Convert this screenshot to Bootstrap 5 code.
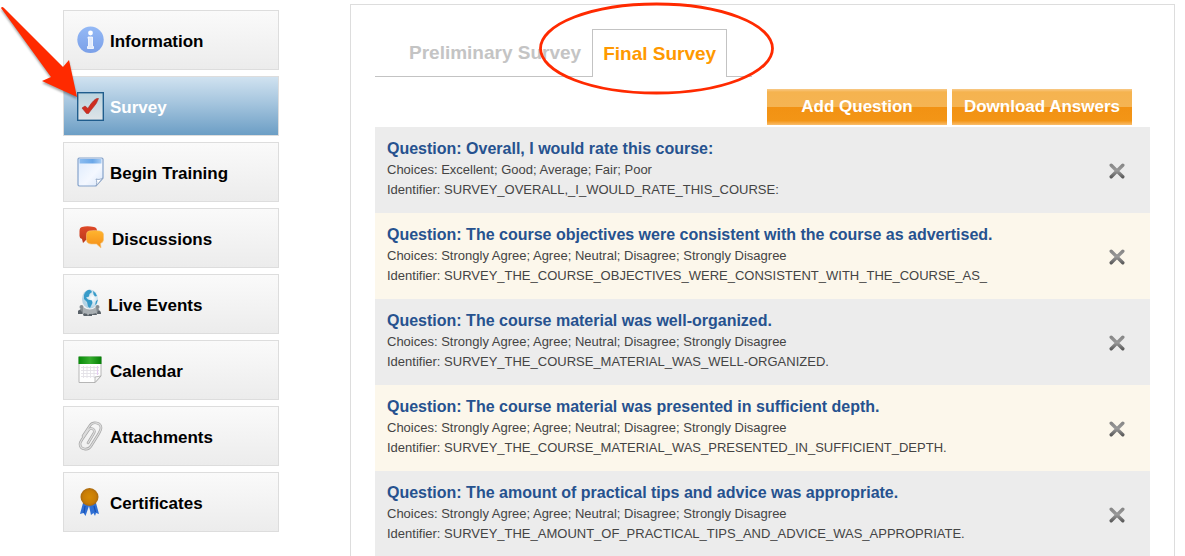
<!DOCTYPE html>
<html lang="en">
<head>
<meta charset="utf-8">
<meta name="viewport" content="width=device-width, initial-scale=1">
<title>Final Survey</title>
<link href="https://cdn.jsdelivr.net/npm/bootstrap@5.3.0/dist/css/bootstrap.min.css" rel="stylesheet">
<style>
  body { font-family: "Liberation Sans", Arial, sans-serif; background: #fff; color: #444; }
  .page { padding: 4px 10px 24px 63px; gap: 71px; }
  .side { width: 216px; padding-top: 6px; gap: 6px; }
  .side-link { height: 60px; padding: 0 13px; gap: 6px; border: 1px solid #ddd; background: linear-gradient(#fafafa, #ececec); color: #000; font-size: 17px; font-weight: 700; text-decoration: none; }
  .side-link.active { background: linear-gradient(#d0e2f0, #a5c5de 45%, #6c9ec5); color: #fff; }
  .side-link span { padding-top: 4px; }
  .panel { border: 1px solid #ddd; padding: 24px; min-width: 0; }
  .tabs { width: 377px; height: 48px; padding-left: 24px; gap: 1px; border-bottom: 1px solid #c3c3c3; font-size: 19px; font-weight: 700; }
  .tabs .nav-link { padding: 9px 10px; color: #c4c4c4; line-height: 30px; border: 0; white-space: nowrap; }
  .tabs .nav-link.active { color: #f90; background: #fff; border: 1px solid #c3c3c3; border-bottom: 0; height: 48px; }
  .actions { gap: 5px; padding: 12px 18px 2px 0; }
  .btn-gold { width: 180px; height: 36px; padding: 0; border: 0; border-radius: 0; color: #fff; font-size: 17px; font-weight: 700; background: linear-gradient(#f8c987, #f5b34f 3px, #f5b453 50%, #f29213 50%, #f39516 88%, #f9bd6c); }
  .btn-gold:hover { color: #fff; }
  .question { height: 86px; padding: 11px 25px 0 12px; background: #ececec; font-size: 13px; line-height: 20px; }
  .question:nth-child(even) { background: #fcf7eb; }
  .question h2 { font-size: 16px; line-height: 22px; font-weight: 700; color: #26528f; margin: 0; }
  .btn-remove { border: 0; background: none; padding: 0; height: 66px; line-height: 0; }
  .mark-oval { left: 538px; top: 1px; }
  .mark-arrow { left: 0; top: 0; }
</style>
</head>
<body>
<div class="page d-flex align-items-start position-relative">
  <nav class="side d-flex flex-column flex-shrink-0" aria-label="Course">
    <a class="side-link d-flex align-items-center" href="#">
      <svg width="27" height="28" viewBox="0 0 27 28"><defs><linearGradient id="gi" x2="0" y2="1"><stop stop-color="#94b9f6"/><stop offset="1" stop-color="#7ba0e8"/></linearGradient></defs><circle cx="13.500" cy="13.800" r="13.200" fill="url(#gi)"/><circle cx="13.500" cy="7" r="2.400" fill="#fff"/><path d="M11 11H15.500V20.500H16.500V22.500H10.500V20.500H11.500V12.500H11Z" fill="#e3ebfc" stroke="#fff" stroke-width=".8"/></svg>
      <span>Information</span></a>
    <a class="side-link active d-flex align-items-center" href="#" aria-current="page">
      <svg width="27" height="29" viewBox="0 0 27 29"><defs><linearGradient id="gs" x2="0" y2="1"><stop stop-color="#b9d3de"/><stop offset="1" stop-color="#dfe4e8"/></linearGradient></defs><rect x=".7" y=".7" width="25.600" height="27.600" fill="url(#gs)" stroke="#205d8d" stroke-width="1.400"/><path d="M5 16L8 14L11 16.500C13.500 12 17 7.500 20 6.500H21.500L19.500 11C17.500 14 14 18 11.500 21.500H9.500Z" fill="#cf2d20" stroke="#a92a22" stroke-width=".6"/></svg>
      <span>Survey</span></a>
    <a class="side-link d-flex align-items-center" href="#">
      <svg width="27" height="30" viewBox="0 0 27 30"><defs><linearGradient id="gb" x2="1" y2="1"><stop stop-color="#dceafd"/><stop offset=".6" stop-color="#f4f8ff"/><stop offset="1" stop-color="#d8e6fa"/></linearGradient><linearGradient id="gt"><stop stop-color="#8bbcf0"/><stop offset=".6" stop-color="#6aa7e8"/><stop offset="1" stop-color="#a9cdf4"/></linearGradient></defs><path d="M2 1H25L26 2V21L19 29H2L1 28V2Z" fill="url(#gb)" stroke="#86a3cb" stroke-width="1.200"/><path d="M2.500 2H24.500V6.500H2.500Z" fill="url(#gt)"/><path d="M19 29C20 27 20 24 19 22C22 23 24 22 26 21Z" fill="#fff" stroke="#8fa5c4" stroke-width=".9"/></svg>
      <span>Begin Training</span></a>
    <a class="side-link d-flex align-items-center" href="#">
      <svg width="29" height="26" viewBox="0 0 29 26"><defs><linearGradient id="gr" x2="0" y2="1"><stop stop-color="#df4928"/><stop offset="1" stop-color="#b9371b"/></linearGradient><linearGradient id="gy" x2="0" y2="1"><stop stop-color="#ffb52e"/><stop offset="1" stop-color="#f48d18"/></linearGradient></defs><path d="M5 2Q10 .5 17 2Q20 2.500 20 6V12Q19 15 14 15H9L6 18L5 14Q2.500 13.500 2.500 11V6Q2.500 2.500 5 2Z" fill="url(#gr)"/><path d="M12 6Q18 4.800 23 6Q26 6.500 26.500 9V15Q26 18 23.500 18.500L24 23L19.500 19H14Q9.500 18.500 9.500 15V9.500Q9.500 6.500 12 6Z" fill="url(#gy)" stroke="#f5c276" stroke-width=".6"/></svg>
      <span>Discussions</span></a>
    <a class="side-link d-flex align-items-center" href="#">
      <svg width="25" height="32" viewBox="0 0 25 32"><defs><radialGradient id="gl" cx=".65" cy=".45"><stop stop-color="#fff"/><stop offset="1" stop-color="#b4d3e4"/></radialGradient></defs><g fill="#858c91"><circle cx="4.500" cy="19" r="2"/><circle cx="20.500" cy="19" r="2"/><path d="M2 23Q3 20 6 20L8 25H3Z"/><path d="M17 25L19 20Q22 20 23 24V26Z"/></g><path d="M1 26V23Q2 21.500 4 22.500L6 26ZM6 27Q7 22 10 24L11 28H7ZM11 28Q12 23 15 25V28ZM15 27Q16 23 19 24L20 27ZM20 26L21 23Q24 22 24 26Z" fill="#596168"/><path d="M6 19Q13 24 19 19L20 25Q13 27 6 25Z" fill="#a9afb3"/><ellipse cx="13" cy="11" rx="8" ry="9.500" fill="url(#gl)"/><path d="M7 7Q8 3 12 1.800L14 2.500L15 4L12.500 6L12 8.500L9 9.500L11 11.500L15 12.500L15.500 15L13 20L11 18.500L10 14L7 11ZM16 3L18.500 5L20 8L18 8.500L16.500 6.500ZM19 13L21 11.500L19.500 16L18 17Z" fill="#379bc9"/></svg>
      <span>Live Events</span></a>
    <a class="side-link d-flex align-items-center" href="#">
      <svg width="27" height="30" viewBox="0 0 27 30"><defs><linearGradient id="gc"><stop stop-color="#078a08"/><stop offset=".5" stop-color="#35ad2d"/><stop offset="1" stop-color="#057f06"/></linearGradient></defs><path d="M2 2H24V21L18 27.500H2Z" fill="#fff" stroke="#b6b6b6"/><path d="M1.500 1.500H24.500V9H1.500Z" fill="url(#gc)"/><path d="M4 12.500H22M4 15.500H22M4 18.500H22M4 21.500H18M6.500 11V23M10 11V23M13.500 11V23M17 11V23" stroke="#e3e1e6" stroke-width=".9"/><path d="M20.500 11V20" stroke="#e5cdf1" stroke-width="1.200"/><path d="M18 27.500V22L24 21Z" fill="#f5f5f5" stroke="#aaa" stroke-width=".8"/></svg>
      <span>Calendar</span></a>
    <a class="side-link d-flex align-items-center" href="#">
      <svg width="27" height="30" viewBox="0 0 27 30" fill="none" stroke-linecap="round"><path d="M6 15L13 4.500C16 0 24 1.500 24 7C24 9 22.500 11 21.500 13L14 25C11 30 3 28.500 3 23C3 21.500 4 20 5 18.500L11.500 9C14 6 18.500 8 17 12L11 22" stroke="#a5a5a5" stroke-width="2.600"/><path d="M6 15L13 4.500C16 0 24 1.500 24 7C24 9 22.500 11 21.500 13L14 25C11 30 3 28.500 3 23C3 21.500 4 20 5 18.500L11.500 9C14 6 18.500 8 17 12L11 22" stroke="#dcdcdc" stroke-width="1.300"/></svg>
      <span>Attachments</span></a>
    <a class="side-link d-flex align-items-center" href="#">
      <svg width="27" height="30" viewBox="0 0 27 30"><defs><radialGradient id="gm"><stop stop-color="#d58a06"/><stop offset=".7" stop-color="#c87d06"/><stop offset="1" stop-color="#a96a12"/></radialGradient></defs><path d="M6 16L3 27L6.500 26L8.500 29L12 19L14 28L16.500 26L18 29L19 26L22 27L19 16Z" fill="#2f6fd4"/><path d="M8 19L7 26M17 19L18.500 25" stroke="#1a50ad" stroke-width="1.200"/><circle cx="12.500" cy="10" r="9" fill="url(#gm)"/></svg>
      <span>Certificates</span></a>
  </nav>

  <main class="panel flex-grow-1">
    <ul class="tabs nav flex-nowrap">
      <li class="nav-item"><a class="nav-link" href="#">Preliminary Survey</a></li>
      <li class="nav-item"><a class="nav-link active" href="#" aria-current="page">Final Survey</a></li>
    </ul>
    <div class="actions d-flex justify-content-end">
      <button type="button" class="btn btn-gold">Add Question</button>
      <button type="button" class="btn btn-gold">Download Answers</button>
    </div>
    <svg width="0" height="0" class="position-absolute"><defs><linearGradient id="gx" gradientUnits="userSpaceOnUse" x1="0" y1="1" x2="0" y2="16"><stop stop-color="#858585"/><stop offset=".45" stop-color="#999"/><stop offset="1" stop-color="#4c4c4c"/></linearGradient><symbol id="cross" viewBox="0 0 16 16"><path d="M2.200 2.200L13.800 13.800M13.800 2.200L2.200 13.800" stroke="url(#gx)" stroke-width="3.400" stroke-linecap="round"/></symbol></defs></svg>
    <div class="questions">
      <section class="question d-flex justify-content-between">
        <div><h2>Question: Overall, I would rate this course:</h2><div>Choices: Excellent; Good; Average; Fair; Poor</div><div>Identifier: SURVEY_OVERALL,_I_WOULD_RATE_THIS_COURSE:</div></div>
        <button type="button" class="btn-remove" aria-label="Remove question"><svg width="16" height="16"><use href="#cross"/></svg></button>
      </section>
      <section class="question d-flex justify-content-between">
        <div><h2>Question: The course objectives were consistent with the course as advertised.</h2><div>Choices: Strongly Agree; Agree; Neutral; Disagree; Strongly Disagree</div><div>Identifier: SURVEY_THE_COURSE_OBJECTIVES_WERE_CONSISTENT_WITH_THE_COURSE_AS_</div></div>
        <button type="button" class="btn-remove" aria-label="Remove question"><svg width="16" height="16"><use href="#cross"/></svg></button>
      </section>
      <section class="question d-flex justify-content-between">
        <div><h2>Question: The course material was well-organized.</h2><div>Choices: Strongly Agree; Agree; Neutral; Disagree; Strongly Disagree</div><div>Identifier: SURVEY_THE_COURSE_MATERIAL_WAS_WELL-ORGANIZED.</div></div>
        <button type="button" class="btn-remove" aria-label="Remove question"><svg width="16" height="16"><use href="#cross"/></svg></button>
      </section>
      <section class="question d-flex justify-content-between">
        <div><h2>Question: The course material was presented in sufficient depth.</h2><div>Choices: Strongly Agree; Agree; Neutral; Disagree; Strongly Disagree</div><div>Identifier: SURVEY_THE_COURSE_MATERIAL_WAS_PRESENTED_IN_SUFFICIENT_DEPTH.</div></div>
        <button type="button" class="btn-remove" aria-label="Remove question"><svg width="16" height="16"><use href="#cross"/></svg></button>
      </section>
      <section class="question d-flex justify-content-between">
        <div><h2>Question: The amount of practical tips and advice was appropriate.</h2><div>Choices: Strongly Agree; Agree; Neutral; Disagree; Strongly Disagree</div><div>Identifier: SURVEY_THE_AMOUNT_OF_PRACTICAL_TIPS_AND_ADVICE_WAS_APPROPRIATE.</div></div>
        <button type="button" class="btn-remove" aria-label="Remove question"><svg width="16" height="16"><use href="#cross"/></svg></button>
      </section>
    </div>
  </main>

  <svg class="mark-arrow position-absolute pe-none" width="90" height="105" viewBox="0 0 90 105" aria-hidden="true"><path d="M1 8Q2 6 4 8L63 67L69 60L77 97L42 81L51 77Z" fill="#ff2a00" style="filter:drop-shadow(0 2px 1px rgba(0,0,0,.35))"/></svg>
  <svg class="mark-oval position-absolute pe-none" width="238" height="96" viewBox="0 0 238 96" aria-hidden="true"><ellipse cx="118.500" cy="47.500" rx="116" ry="44.500" fill="none" stroke="#ff2a00" stroke-width="2.800"/></svg>
</div>
<script src="https://cdn.jsdelivr.net/npm/bootstrap@5.3.0/dist/js/bootstrap.bundle.min.js"></script>
</body>
</html>
